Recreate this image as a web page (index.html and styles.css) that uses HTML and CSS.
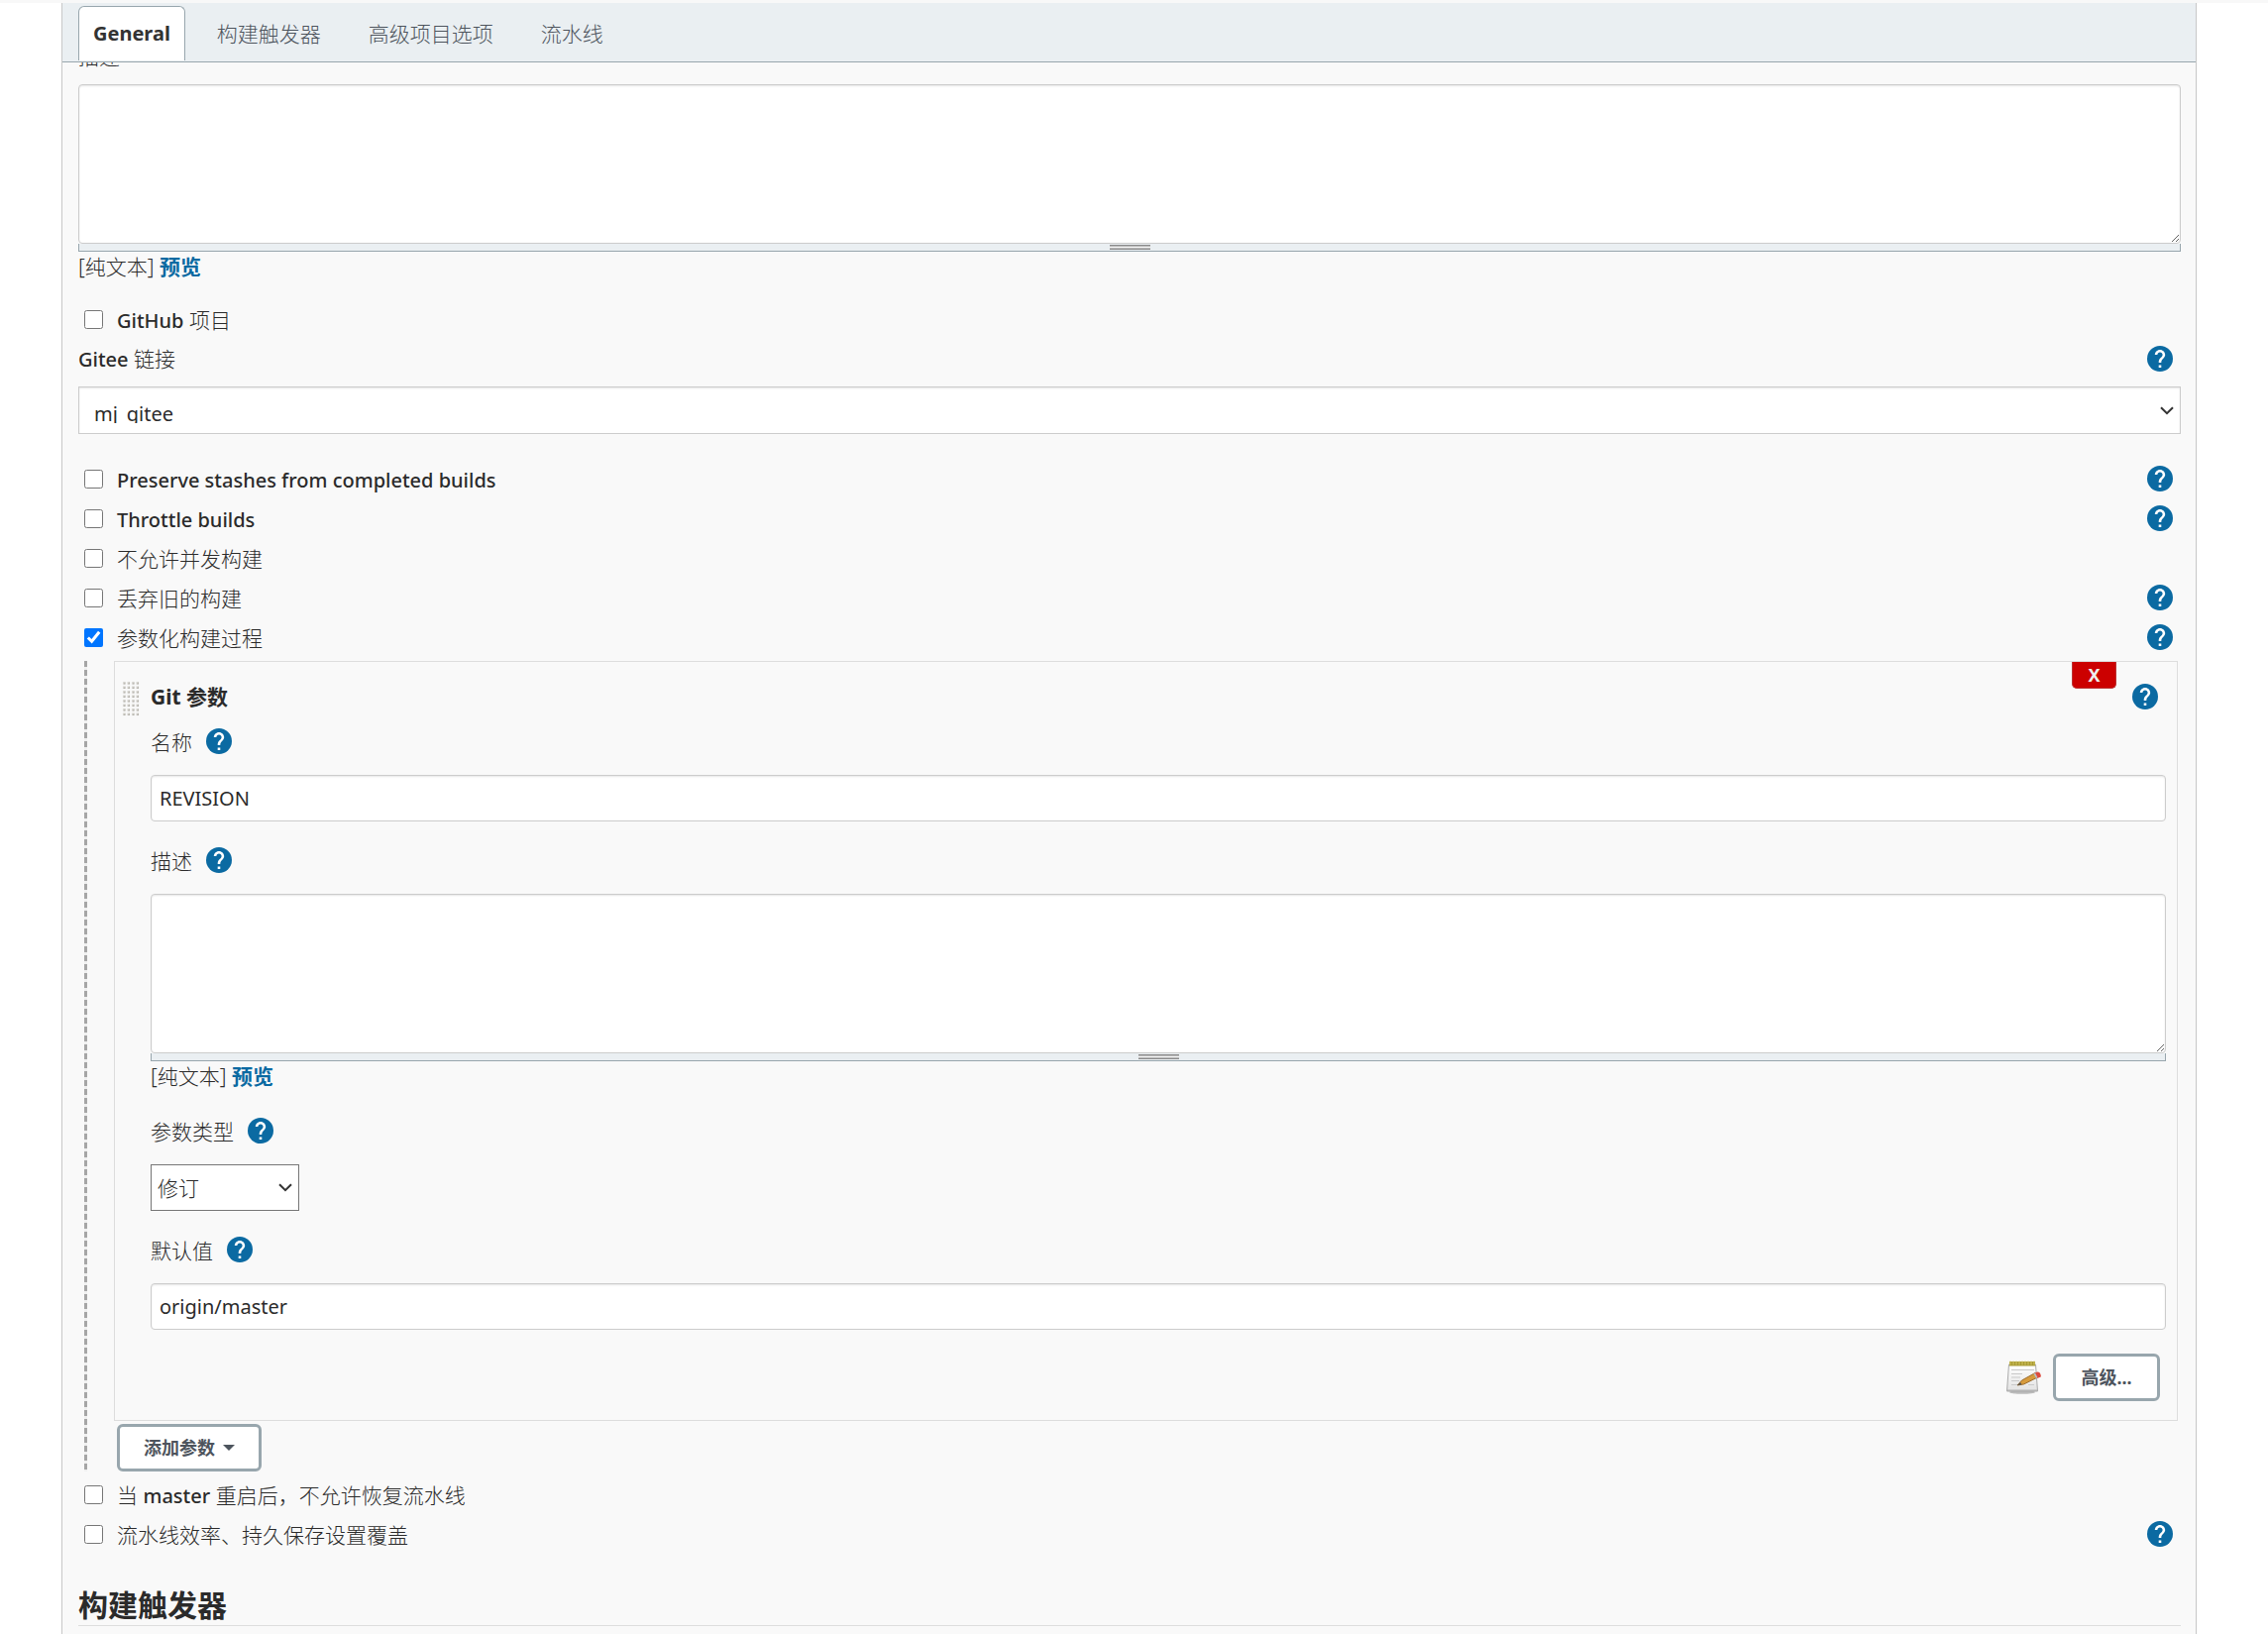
FILE: index.html
```html
<!DOCTYPE html>
<html lang="zh-CN">
<head>
<meta charset="utf-8">
<title>General</title>
<link rel="stylesheet" href="styles.css">
</head>
<body>
<svg class="sprite" aria-hidden="true">
  <symbol id="help" viewBox="2 2 20 20">
    <circle cx="12" cy="12" r="10" fill="#0b6aa2"/>
    <path d="M13 19h-2v-2h2v2zm2.070-7.750l-.9.920C13.450 12.900 13 13.500 13 15h-2v-.5c0-1.100.450-2.100 1.170-2.830l1.240-1.260c.370-.360.590-.860.590-1.410 0-1.100-.9-2-2-2s-2 .9-2 2H8c0-2.210 1.790-4 4-4s4 1.790 4 4c0 .880-.360 1.680-.930 2.250z" fill="#fff"/>
  </symbol>
  <symbol id="chevron" viewBox="0 0 14 9">
    <path d="M1 1.2l6 6 6-6" fill="none" stroke="#333" stroke-width="2"/>
  </symbol>
</svg>
<main class="panel">
  <nav class="tabs">
    <a class="tab active" href="#general">General</a>
    <a class="tab" href="#triggers">构建触发器</a>
    <a class="tab" href="#advanced">高级项目选项</a>
    <a class="tab" href="#pipeline">流水线</a>
  </nav>
  <form class="form">
    <label class="top-label" for="desc">描述</label>
    <div class="editor">
      <textarea id="desc" class="area"></textarea>
      <div class="grip"><span></span></div>
    </div>
    <p class="markup">[纯文本] <a href="#preview">预览</a></p>

    <div class="row github"><input type="checkbox" id="c1"><label for="c1"><span class="latin">GitHub</span> 项目</label></div>
    <div class="row plain">
      <label for="gitee"><span class="latin">Gitee</span> 链接</label>
      <button type="button" class="help" aria-label="帮助"><svg><use href="#help"/></svg></button>
    </div>
    <div class="select wide">
      <select id="gitee"><option>mj_gitee</option></select>
      <svg><use href="#chevron"/></svg>
    </div>

    <div class="rows">
      <div class="row"><input type="checkbox" id="c2"><label for="c2"><span class="latin">Preserve stashes from completed builds</span></label><button type="button" class="help" aria-label="帮助"><svg><use href="#help"/></svg></button></div>
      <div class="row"><input type="checkbox" id="c3"><label for="c3"><span class="latin">Throttle builds</span></label><button type="button" class="help" aria-label="帮助"><svg><use href="#help"/></svg></button></div>
      <div class="row"><input type="checkbox" id="c4"><label for="c4">不允许并发构建</label></div>
      <div class="row"><input type="checkbox" id="c5"><label for="c5">丢弃旧的构建</label><button type="button" class="help" aria-label="帮助"><svg><use href="#help"/></svg></button></div>
      <div class="row"><input type="checkbox" id="c6" checked><label for="c6">参数化构建过程</label><button type="button" class="help" aria-label="帮助"><svg><use href="#help"/></svg></button></div>
    </div>

    <div class="nested">
      <section class="chunk">
        <button type="button" class="delete">X</button>
        <div class="chunk-head">
          <svg class="drag" viewBox="0 0 18 36" aria-hidden="true">
            <defs><pattern id="dots" width="4.5" height="4.5" patternUnits="userSpaceOnUse"><path d="M3.5 1v2.5H1z" fill="#aaa89f"/><path d="M1 1h2v2H1z" fill="#c4c2bb" opacity=".6"/></pattern></defs>
            <rect width="18" height="36" fill="url(#dots)"/>
          </svg>
          <b>Git 参数</b>
          <button type="button" class="help" aria-label="帮助"><svg><use href="#help"/></svg></button>
        </div>
        <div class="field first">
          <div class="field-label"><label for="name">名称</label><button type="button" class="help" aria-label="帮助"><svg><use href="#help"/></svg></button></div>
          <input class="text" type="text" id="name" value="REVISION">
        </div>
        <div class="field">
          <div class="field-label"><label for="pdesc">描述</label><button type="button" class="help" aria-label="帮助"><svg><use href="#help"/></svg></button></div>
          <div class="editor">
            <textarea id="pdesc" class="area"></textarea>
            <div class="grip"><span></span></div>
          </div>
          <p class="markup">[纯文本] <a href="#preview">预览</a></p>
        </div>
        <div class="field">
          <div class="field-label"><label for="type">参数类型</label><button type="button" class="help" aria-label="帮助"><svg><use href="#help"/></svg></button></div>
          <div class="select small">
            <select id="type"><option>修订</option></select>
            <svg><use href="#chevron"/></svg>
          </div>
        </div>
        <div class="field">
          <div class="field-label"><label for="default">默认值</label><button type="button" class="help" aria-label="帮助"><svg><use href="#help"/></svg></button></div>
          <input class="text" type="text" id="default" value="origin/master">
        </div>
        <div class="actions">
          <svg class="notepad" viewBox="0 0 36 36" aria-hidden="true">
            <defs><linearGradient id="paper" x2="0" y2="1"><stop offset="0" stop-color="#fff"/><stop offset="1" stop-color="#e2e2e2"/></linearGradient></defs>
            <ellipse cx="17" cy="33" rx="13" ry="1.8" fill="#bbb"/>
            <path d="M3.5 5h27l2 27h-31z" fill="url(#paper)" stroke="#aaa"/>
            <path d="M1.5 30.500h31v1.500h-31z" fill="#b4b4b4"/>
            <path d="M4 2h26v4.5H4z" fill="#a89a35"/>
            <path d="M5 1.5v4M8 1.5v4M11 1.5v4M14 1.5v4M17 1.5v4M20 1.5v4M23 1.5v4M26 1.5v4M29 1.5v4" stroke="#d5c862"/>
            <path d="M6 10.5h23M6 14.5h11M6 18h9M6 21.5h8M6 25.500h8M23 25.500h6" stroke="#c9c9c9"/>
            <path d="M12 26l4.500-5L30 13.500l2.500 4.500-14 7z" fill="#d79b3c" stroke="#8a5a1c" stroke-width=".8"/>
            <path d="M12 26l3-3 1.500 2.200z" fill="#555"/>
            <path d="M29.500 13.700l2-1q3-.7 4 2.300t-1 3l-2.500 1z" fill="#dd4b3e"/>
            <path d="M28.500 14.200l1.500-.8 2.500 4.800-1.500.7z" fill="#b9c0c8"/>
          </svg>
          <button type="button" class="btn advanced">高级...</button>
        </div>
      </section>
      <button type="button" class="btn add">添加参数<i class="caret"></i></button>
    </div>

    <div class="row"><input type="checkbox" id="c7"><label for="c7">当 <span class="latin">master</span> 重启后，不允许恢复流水线</label></div>
    <div class="row"><input type="checkbox" id="c8"><label for="c8">流水线效率、持久保存设置覆盖</label><button type="button" class="help" aria-label="帮助"><svg><use href="#help"/></svg></button></div>
    <h2 class="section-title">构建触发器</h2>
  </form>
</main>
</body>
</html>
```
FILE: styles.css
```css
* { box-sizing: border-box; }

body {
  margin: 0;
  padding-top: 3px;
  background: linear-gradient(#f8f8f8 3px, #fff 3px);
  color: #2b2b2b;
  font: 300 21px/24px "Noto Sans", "Noto Sans CJK SC", sans-serif;
}

button, input, select, textarea { font: inherit; color: inherit; margin: 0; }

.sprite { position: absolute; width: 0; height: 0; }

.panel {
  min-height: calc(100vh - 3px);
  margin: 0 72px 0 62px;
  background: #f9f9f9;
  border: solid #c8c8c8;
  border-width: 0 1px;
}

.tabs {
  position: relative;
  z-index: 1;
  display: flex;
  height: 60px;
  padding: 3px 16px 0;
  background: #eaeff2;
  border-bottom: 1px solid #98a6ad;
}
.tab {
  height: 55px;
  padding: 0 15px;
  border: 1px solid transparent;
  border-bottom: 0;
  border-radius: 6px 6px 0 0;
  color: #4d545d;
  line-height: 54px;
  text-decoration: none;
  margin-right: 16px;
}
.tab.active {
  padding: 0 14px;
  background: #fff;
  border-color: #98a6ad;
  color: #333;
  font-size: 20px;
  font-weight: 700;
}

.form { margin-top: -18px; padding: 0 15px 0 16px; }
.top-label { display: block; margin-bottom: 16px; }

.area {
  display: block;
  width: 100%;
  height: 161px;
  padding: 8px;
  border: 1px solid #ccc;
  border-radius: 4px;
  background: #fff;
  box-shadow: inset 0 1px 2px rgba(0, 0, 0, .1);
  resize: both;
}
.grip {
  display: flex;
  justify-content: center;
  height: 8px;
  padding-top: 1px;
  background: #eaeff2;
  border: 1px solid #98a6ad;
  border-top: 0;
}
.grip span {
  width: 41px;
  height: 5px;
  background: linear-gradient(#8c8c8c 1px, #b8b8b8 1px 2px, #f4f4f4 2px 3px, #b8b8b8 3px 4px, #8c8c8c 4px);
}
.markup { margin: 0; line-height: 31px; }
.markup a { color: #0b6aa2; font-weight: 700; text-decoration: none; }

.row { display: flex; align-items: center; height: 40px; padding: 0 8px 0 6px; }
.row input { width: 19px; height: 19px; margin-right: 14px; }
.row label, .field-label label { padding-top: 2px; }
.row.github { height: 39px; margin-top: 18px; }
.row.plain { height: 39px; padding-left: 0; margin-bottom: 9px; }
.latin { font-size: 20px; font-weight: 500; }

.help { width: 26px; height: 26px; padding: 0; border: 0; background: none; }
.help svg { display: block; width: 26px; height: 26px; }
.row .help, .chunk-head .help { margin-left: auto; }

.select { display: grid; align-items: center; }
.select > * { grid-area: 1 / 1; }
.select svg { width: 14px; height: 9px; justify-self: end; margin-right: 7px; pointer-events: none; }
.select select { width: 100%; appearance: none; background: #fff; border: 1px solid #ccc; border-radius: 0; }
.wide select {
  height: 48px;
  padding: 18px 15px 10px;
  font-size: 20px;
  font-weight: 400;
  line-height: 18px;
  box-shadow: inset 0 1px 2px rgba(0, 0, 0, .1);
}
.small { width: 150px; }
.small select { height: 47px; padding: 0 6px; border-color: #767676; }

.rows { margin: 25px 0 4px; }

.nested {
  margin-left: 6px;
  padding: 0 3px 0 30px;
  margin-bottom: 3px;
  background: repeating-linear-gradient(#a6a6a6 0 6px, #f0f0f0 6px 9px) left top / 3px 100% no-repeat;
}
.chunk {
  position: relative;
  padding: 15px 11px 19px 36px;
  border: 1px solid #ddd;
}
.delete {
  position: absolute;
  top: 0;
  right: 61px;
  width: 45px;
  height: 27px;
  padding: 0;
  border: 1px solid #b33;
  border-top: 0;
  border-radius: 0 0 5px 5px;
  background: #c00;
  color: #eee;
  font-size: 18px;
  font-weight: 700;
  line-height: 26px;
}
.chunk-head { display: flex; align-items: center; height: 40px; padding-right: 8px; margin-left: -29px; }
.chunk-head b { font-weight: 700; }
.drag { width: 18px; height: 36px; margin: 4px 11px 0 0; }

.field { margin-top: 19px; }
.field.first { margin-top: 5px; }
.field-label { display: flex; align-items: center; gap: 14px; height: 40px; margin-bottom: 14px; }
.text {
  display: block;
  width: 100%;
  height: 47px;
  padding: 0 8px;
  border: 1px solid #ccc;
  border-radius: 4px;
  background: #fff;
  font-size: 20px;
  font-weight: 400;
  box-shadow: inset 0 1px 2px rgba(0, 0, 0, .1);
}

.actions { display: flex; justify-content: flex-end; align-items: center; gap: 12px; margin-top: 24px; padding-right: 6px; }
.notepad { width: 36px; height: 36px; }
.btn {
  height: 48px;
  padding: 0 24px;
  border: 3px solid #98a6ad;
  border-radius: 6px;
  background: #fff;
  color: #4d545d;
  font-size: 18px;
  font-weight: 700;
}
.advanced { min-width: 108px; }
.add { display: flex; align-items: center; gap: 8px; margin: 3px 0 0 3px; }
.caret { border: 6px solid transparent; border-top-color: #4d545d; border-bottom: 0; }

.section-title {
  margin: 32px 0 0;
  border-bottom: 1px solid #ddd;
  font-size: 30px;
  font-weight: 700;
  line-height: 40px;
}
```
